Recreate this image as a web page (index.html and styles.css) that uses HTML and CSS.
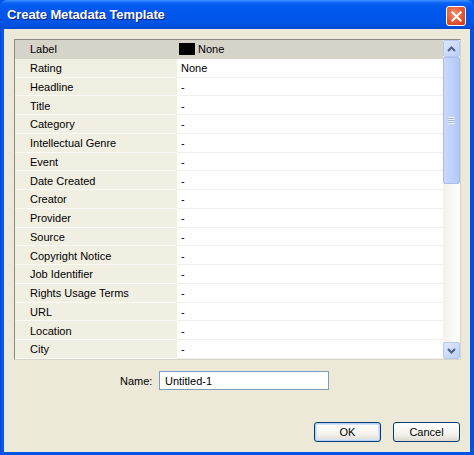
FILE: index.html
```html
<!DOCTYPE html>
<html lang="en">
<head>
  <meta charset="UTF-8" />
  <title>Create Metadata Template</title>
  <link rel="stylesheet" href="styles.css">
</head>
<body>
  <div class="window">
    <div class="titlebar">
      <span class="title">Create Metadata Template</span>
      <button class="close" aria-label="Close">
        <svg width="11" height="11" viewBox="0 0 11 11">
          <path d="M1.5 1.5 L9.5 9.5 M9.5 1.5 L1.5 9.5" stroke="#fff" stroke-width="2" stroke-linecap="square"/>
        </svg>
      </button>
    </div>

    <div class="content">
      <div class="panel">
        <div class="rows">
          <div class="row selected">
            <div class="key">Label</div>
            <div class="val"><span class="swatch"></span>None</div>
          </div>
          <div class="row"><div class="key">Rating</div><div class="val">None</div></div>
          <div class="row"><div class="key">Headline</div><div class="val">-</div></div>
          <div class="row"><div class="key">Title</div><div class="val">-</div></div>
          <div class="row"><div class="key">Category</div><div class="val">-</div></div>
          <div class="row"><div class="key">Intellectual Genre</div><div class="val">-</div></div>
          <div class="row"><div class="key">Event</div><div class="val">-</div></div>
          <div class="row"><div class="key">Date Created</div><div class="val">-</div></div>
          <div class="row"><div class="key">Creator</div><div class="val">-</div></div>
          <div class="row"><div class="key">Provider</div><div class="val">-</div></div>
          <div class="row"><div class="key">Source</div><div class="val">-</div></div>
          <div class="row"><div class="key">Copyright Notice</div><div class="val">-</div></div>
          <div class="row"><div class="key">Job Identifier</div><div class="val">-</div></div>
          <div class="row"><div class="key">Rights Usage Terms</div><div class="val">-</div></div>
          <div class="row"><div class="key">URL</div><div class="val">-</div></div>
          <div class="row"><div class="key">Location</div><div class="val">-</div></div>
          <div class="row"><div class="key">City</div><div class="val">-</div></div>
        </div>

        <div class="scrollbar">
          <div class="arrow">
            <svg width="9" height="6" viewBox="0 0 9 6"><path d="M1 5 L4.5 1.5 L8 5" fill="none" stroke="#4d6185" stroke-width="2"/></svg>
          </div>
          <div class="track">
            <div class="thumb">
              <span class="grip"></span>
            </div>
          </div>
          <div class="arrow">
            <svg width="9" height="6" viewBox="0 0 9 6"><path d="M1 1 L4.5 4.5 L8 1" fill="none" stroke="#4d6185" stroke-width="2"/></svg>
          </div>
        </div>
      </div>

      <div class="name-row">
        <label for="name">Name:</label>
        <input type="text" id="name" value="Untitled-1" />
      </div>

      <div class="buttons">
        <button class="btn default">OK</button>
        <button class="btn">Cancel</button>
      </div>
    </div>
  </div>
</body>
</html>
```

FILE: styles.css
```css
* {
  box-sizing: border-box;
  margin: 0;
  padding: 0;
}

body {
  width: 474px;
  height: 455px;
  font-family: "Liberation Sans", Arial, sans-serif;
  font-size: 11px;
  color: #000;
  background: #0054e3;
}

.window {
  display: flex;
  flex-direction: column;
  height: 455px;
  background: linear-gradient(to right, #0b3fd0, #0a5bf0 2px, #0054e3 4px);
  border-radius: 7px 7px 0 0;
  overflow: hidden;
}

.titlebar {
  height: 29px;
  display: flex;
  align-items: center;
  justify-content: space-between;
  padding: 0 8px 0 7px;
  background: linear-gradient(to bottom, #3d95ff 0, #0a61f4 3px, #0058ee 8px, #0055ea 18px, #0054e3 24px, #0048d0 29px);
}

.title {
  color: #fff;
  font-weight: bold;
  font-size: 13px;
  letter-spacing: -0.1px;
  text-shadow: 1px 1px 0 #0a1e7a;
}

.close {
  width: 20px;
  height: 20px;
  border: 1px solid #fff;
  border-radius: 3px;
  background: radial-gradient(circle at 40% 35%, #f2916f, #e2512b 60%, #c4381a);
  display: flex;
  align-items: center;
  justify-content: center;
  margin-top: 3px;
}

.content {
  flex: 1;
  display: flex;
  flex-direction: column;
  background: #ece9d8;
  margin: 0 4px 3px 4px;
  padding: 10px 9px 10px 10px;
}

.panel {
  display: flex;
  height: 321px;
  border: 1px solid #8c8a80;
  border-right-color: #d8d5c8;
  border-bottom-color: #d8d5c8;
  background: #fff;
}

.rows {
  flex: 1;
  display: flex;
  flex-direction: column;
}

.row {
  display: flex;
  height: 18.75px;
}

.key {
  width: 162px;
  padding-left: 15px;
  padding-top: 1px;
  background: #f1efe2;
  border-bottom: 1px solid #faf9f3;
  display: flex;
  align-items: center;
}

.val {
  flex: 1;
  padding-left: 4px;
  padding-top: 1px;
  border-bottom: 1px solid #f1f0ea;
  display: flex;
  align-items: center;
}

.row.selected .key,
.row.selected .val {
  background: #d6d3c9;
  border-bottom-color: #d6d3c9;
}

.swatch {
  width: 16px;
  height: 12px;
  background: #000;
  margin-left: -2px;
  margin-right: 3px;
}

.scrollbar {
  width: 17px;
  display: flex;
  flex-direction: column;
  background: linear-gradient(to right, #f3f2ec, #fefefb);
}

.arrow {
  height: 17px;
  display: flex;
  align-items: center;
  justify-content: center;
  background: linear-gradient(to bottom right, #dfe8fe, #bccefa);
  border: 1px solid #b7c9f3;
  border-radius: 2px;
}

.track {
  flex: 1;
}

.thumb {
  height: 127px;
  background: linear-gradient(to right, #c9d8fc, #bcd0fa 60%, #b3c7f5);
  border: 1px solid #a9bdeb;
  border-radius: 2px;
  display: flex;
  align-items: center;
  justify-content: center;
}

.grip {
  width: 7px;
  height: 7px;
  background: repeating-linear-gradient(to bottom, #eef3fe 0, #eef3fe 1px, #9fb5e6 1px, #9fb5e6 2px);
}

.name-row {
  display: flex;
  align-items: center;
  margin-top: 11px;
  padding-left: 106px;
}

.name-row label {
  width: 37px;
  margin-right: 2px;
}

.name-row input {
  width: 170px;
  height: 19px;
  border: 1px solid #7f9db9;
  font-family: "Liberation Sans", Arial, sans-serif;
  font-size: 11px;
  padding: 0 5px;
}

.buttons {
  margin-top: auto;
  display: flex;
  justify-content: flex-end;
  gap: 12px;
  padding-right: 1px;
}

.btn {
  width: 67px;
  height: 20px;
  border: 1px solid #003c74;
  border-radius: 3px;
  background: linear-gradient(to bottom, #fff, #f4f3ee 60%, #dcd9cf);
  font-family: "Liberation Sans", Arial, sans-serif;
  font-size: 11px;
  color: #000;
}

.btn.default {
  box-shadow: inset 0 0 0 1px #b8d0f8, inset 0 0 0 2px #d5e2fb;
}
```
